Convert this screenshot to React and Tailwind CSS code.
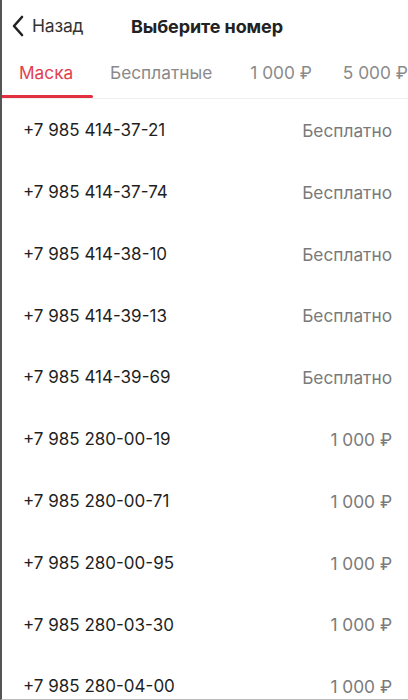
import React from "react";

const rows = [
  ["+7 985 414-37-21", "Бесплатно"],
  ["+7 985 414-37-74", "Бесплатно"],
  ["+7 985 414-38-10", "Бесплатно"],
  ["+7 985 414-39-13", "Бесплатно"],
  ["+7 985 414-39-69", "Бесплатно"],
  ["+7 985 280-00-19", "1 000 ₽"],
  ["+7 985 280-00-71", "1 000 ₽"],
  ["+7 985 280-00-95", "1 000 ₽"],
  ["+7 985 280-03-30", "1 000 ₽"],
  ["+7 985 280-04-00", "1 000 ₽"],
];

export default function App() {
  return (
    <div
      className="w-[408px] h-[700px] overflow-hidden bg-white flex flex-col border-l-2 border-l-[#555] border-b border-b-[#bbb]"
      style={{ fontFamily: "Inter, 'Noto Sans', sans-serif" }}
    >
      <div className="h-[52px] flex items-center shrink-0">
        <div className="flex items-center pl-[9px] w-[129px]">
          <svg width="14" height="22" viewBox="0 0 14 22" fill="none">
            <path d="M11 2 L3 11 L11 20" stroke="#222" strokeWidth="2.6" strokeLinecap="round" strokeLinejoin="round" />
          </svg>
          <span className="ml-[7px] text-[17.5px] text-[#333] tracking-[-0.2px]">Назад</span>
        </div>
        <span className="text-[18px] font-bold text-[#222] tracking-[-0.1px]">Выберите номер</span>
      </div>
      <div className="h-[47px] flex items-end shrink-0 border-b border-[#eeeeee] whitespace-nowrap">
        <div className="flex flex-col w-[91px] shrink-0">
          <span className="text-[17.3px] text-[#e3404e] pl-[17px] pb-[9px]">Маска</span>
          <div className="h-[3px] bg-[#e3303f] rounded-r-sm" />
        </div>
        <span className="text-[17.3px] text-[#8a8a8a] ml-[17px] pb-[12px] shrink-0">Бесплатные</span>
        <span className="text-[17.3px] text-[#8a8a8a] ml-[38px] pb-[12px] shrink-0">1 000 ₽</span>
        <span className="text-[17.3px] text-[#8a8a8a] ml-[31px] pb-[12px] shrink-0">5 000 ₽</span>
      </div>
      <div className="flex flex-col pt-[1px]">
        {rows.map(([n, p]) => (
          <div key={n} className="h-[61.8px] shrink-0 flex items-center justify-between pl-[21px] pr-[16px]">
            <span className="text-[17px] text-[#1f1f1f]">{n}</span>
            <span className="text-[17.3px] text-[#7a7a7a]">{p}</span>
          </div>
        ))}
      </div>
    </div>
  );
}
